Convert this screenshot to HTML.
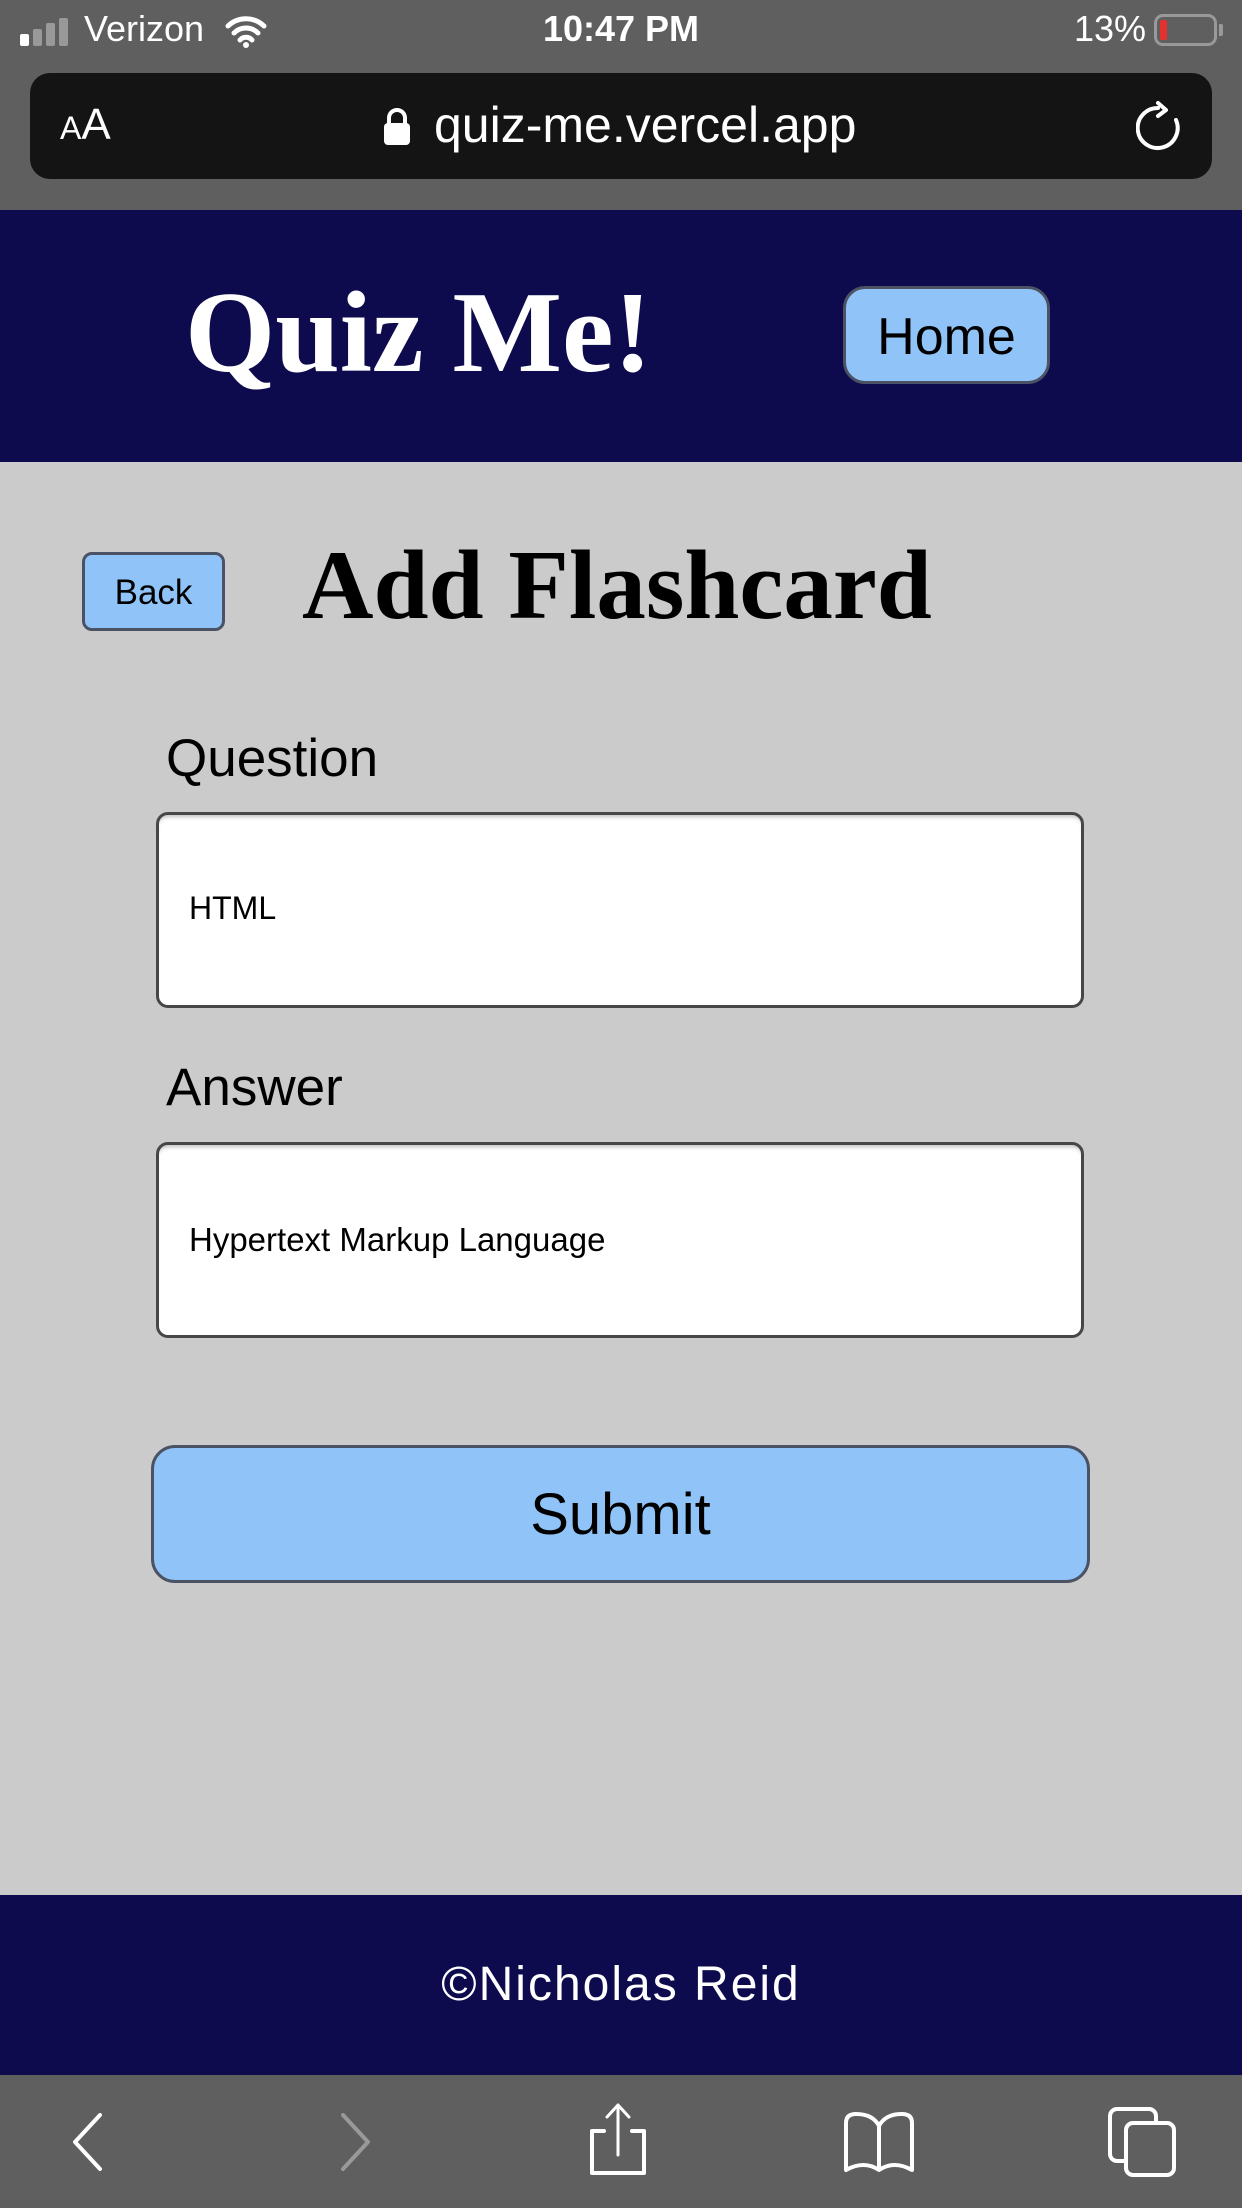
<!DOCTYPE html>
<html><head><meta charset="utf-8"><style>
*{margin:0;padding:0;box-sizing:border-box}
body{width:1242px;height:2208px;position:relative;background:#cbcbcb;font-family:"Liberation Sans",sans-serif;overflow:hidden}
.abs{position:absolute}
</style></head><body>
<div class="abs" style="left:0;top:0;width:1242px;height:210px;background:#5f5f5f"></div>
<!-- status -->
<div class="abs" style="left:20px;top:18px;width:60px;height:28px">
<div class="abs" style="left:0;top:16px;width:9px;height:12px;background:#fff;border-radius:2px"></div>
<div class="abs" style="left:13px;top:11px;width:9px;height:17px;background:#999;border-radius:2px"></div>
<div class="abs" style="left:26px;top:5px;width:9px;height:23px;background:#999;border-radius:2px"></div>
<div class="abs" style="left:39px;top:0;width:9px;height:28px;background:#999;border-radius:2px"></div>
</div>
<div class="abs" style="left:84px;top:8px;color:#fff;font-size:36px">Verizon</div>
<svg class="abs" style="left:224px;top:14px" width="44" height="34" viewBox="0 0 44 34"><path d="M4 12a26 26 0 0 1 36 0M10 19a17 17 0 0 1 24 0M16 26a8 8 0 0 1 12 0" stroke="#fff" stroke-width="5" fill="none" stroke-linecap="round"/><circle cx="22" cy="31" r="3" fill="#fff"/></svg>
<div class="abs" style="left:0;width:1242px;top:8px;text-align:center;color:#fff;font-size:36px;font-weight:bold">10:47 PM</div>
<div class="abs" style="left:1074px;top:8px;color:#fff;font-size:36px">13%</div>
<div class="abs" style="left:1154px;top:14px;width:63px;height:32px;border:3px solid #999;border-radius:9px"><div style="position:absolute;left:3px;top:3px;width:7px;height:20px;background:#e53030;border-radius:2px"></div></div>
<div class="abs" style="left:1219px;top:24px;width:4px;height:12px;background:#999;border-radius:0 2px 2px 0"></div>
<!-- url -->
<div class="abs" style="left:30px;top:73px;width:1182px;height:106px;background:#141414;border-radius:20px"></div>
<div class="abs" style="left:60px;top:100px;color:#fff;font-size:44px"><span style="font-size:32px">A</span>A</div>
<svg class="abs" style="left:383px;top:108px" width="28" height="38" viewBox="0 0 28 38"><path d="M6 16V10a8 8 0 0 1 16 0v6" stroke="#fff" stroke-width="4" fill="none"/><rect x="1" y="15" width="26" height="22" rx="4" fill="#fff"/></svg>
<div class="abs" style="left:434px;top:96px;color:#fff;font-size:50px">quiz-me.vercel.app</div>
<svg class="abs" style="left:1136px;top:100px" width="50" height="54" viewBox="0 0 50 54"><path d="M22 8A20 20 0 1 0 40 20" stroke="#fff" stroke-width="4" fill="none" stroke-linecap="round"/><path d="M22 3l8 7-8 6" stroke="#fff" stroke-width="4" fill="none" stroke-linecap="round" stroke-linejoin="round"/></svg>
<!-- header -->
<div class="abs" style="left:0;top:210px;width:1242px;height:252px;background:#0d0b4d"></div>
<div class="abs" style="left:185px;top:268px;color:#fff;font-family:'Liberation Serif',serif;font-weight:bold;font-size:116px;line-height:130px">Quiz Me!</div>
<div class="abs" style="left:843px;top:286px;width:207px;height:98px;background:#90c4f8;border:3px solid #4a5263;border-radius:22px;font-size:52px;line-height:96px;text-align:center">Home</div>
<!-- main -->
<div class="abs" style="left:82px;top:552px;width:143px;height:79px;background:#90c4f8;border:3px solid #4a5263;border-radius:10px;font-size:35px;line-height:75px;text-align:center">Back</div>
<div class="abs" style="left:302px;top:526px;font-family:'Liberation Serif',serif;font-weight:bold;font-size:99px;line-height:120px">Add Flashcard</div>
<div class="abs" style="left:166px;top:727px;font-size:53px;line-height:64px">Question</div>
<div class="abs" style="left:156px;top:812px;width:928px;height:196px;background:#fff;border:3px solid #474747;border-radius:12px;box-shadow:inset 0 5px 4px -3px rgba(0,0,0,.25)"></div>
<div class="abs" style="left:189px;top:890px;font-size:32px">HTML</div>
<div class="abs" style="left:166px;top:1056px;font-size:53px;line-height:64px">Answer</div>
<div class="abs" style="left:156px;top:1142px;width:928px;height:196px;background:#fff;border:3px solid #474747;border-radius:12px;box-shadow:inset 0 5px 4px -3px rgba(0,0,0,.25)"></div>
<div class="abs" style="left:189px;top:1221px;font-size:33px">Hypertext Markup Language</div>
<div class="abs" style="left:151px;top:1445px;width:939px;height:138px;background:#90c4f8;border:3px solid #4a5263;border-radius:24px;font-size:58px;line-height:134px;text-align:center">Submit</div>
<!-- footer -->
<div class="abs" style="left:0;top:1895px;width:1242px;height:180px;background:#0d0b4d;color:#fff;text-align:center;font-size:48px;line-height:180px;letter-spacing:2px">©Nicholas Reid</div>
<!-- toolbar -->
<div class="abs" style="left:0;top:2075px;width:1242px;height:133px;background:#5f5f5f"></div>
<svg class="abs" style="left:0;top:2075px" width="1242" height="133" viewBox="0 0 1242 133" fill="none" stroke-linecap="round" stroke-linejoin="round">
<path d="M100 40L75 67l25 27" stroke="#fff" stroke-width="4"/>
<path d="M343 40l25 27-25 27" stroke="#999" stroke-width="4"/>
<path d="M604 56h-12v42h52V56h-12" stroke="#fff" stroke-width="4"/>
<path d="M618 80V30M607 42l11-12 11 12" stroke="#fff" stroke-width="3"/>
<path d="M846 95V48q0-9 10-9q17 0 23 12q6-12 23-12q10 0 10 9V95q-18-10-33 0q-15-10-33 0zM879 52v42" stroke="#fff" stroke-width="4"/>
<rect x="1110" y="34" width="46" height="52" rx="7" stroke="#fff" stroke-width="4"/>
<rect x="1126" y="48" width="48" height="52" rx="7" fill="#5f5f5f" stroke="#fff" stroke-width="4"/>
</svg>
</body></html>
